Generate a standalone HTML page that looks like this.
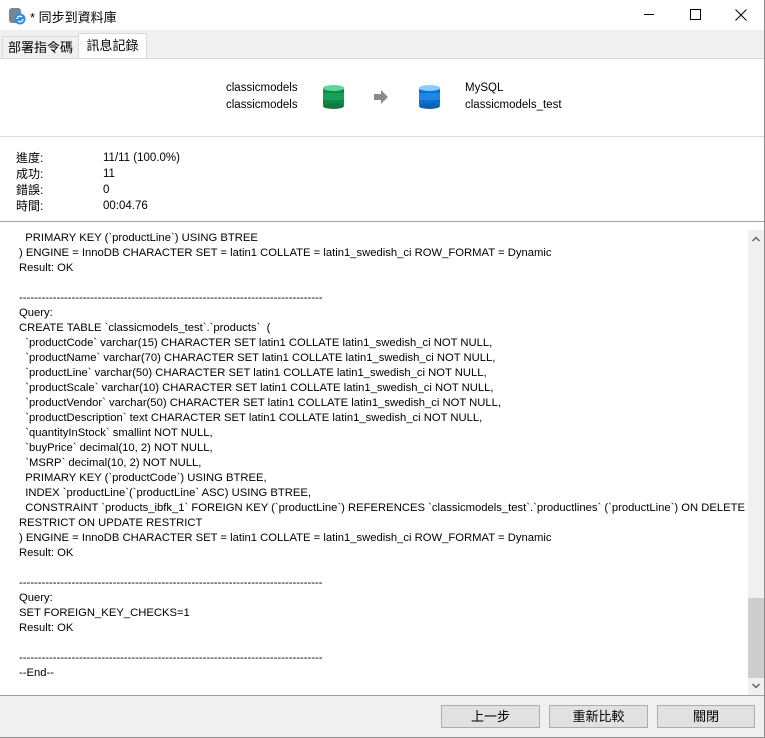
<!DOCTYPE html>
<html><head><meta charset="utf-8"><style>
*{margin:0;padding:0;box-sizing:border-box}
body{width:765px;height:738px;overflow:hidden;background:#f0f0f0;font-family:"Liberation Sans","Noto Sans CJK TC",sans-serif;font-size:12px;color:#000;position:relative}
.a{position:absolute}
.log div{height:15px;line-height:15px;white-space:pre;font-size:11.25px}
.btn{position:absolute;top:705px;height:23px;border:1px solid #adadad;background:#e1e1e1;text-align:center;line-height:21px;font-size:13px}
</style></head><body>
<div class="a" style="left:0;top:0;width:765px;height:30px;background:#fff"></div>
<svg class="a" style="left:8px;top:7px" width="18" height="18"><rect x="1" y="1" width="12" height="15" rx="3" fill="#7a8593"/><circle cx="12" cy="12" r="5.5" fill="#2d8ee0"/><path d="M9 12a3 3 0 0 1 5-2M15 12a3 3 0 0 1-5 2" stroke="#fff" stroke-width="1.3" fill="none"/></svg>
<div class="a" style="left:30px;top:7px;font-size:13px">* 同步到資料庫</div>
<div class="a" style="left:644px;top:14px;width:10px;height:1px;background:#000"></div>
<div class="a" style="left:690px;top:9px;width:11px;height:11px;border:1px solid #000"></div>
<svg class="a" style="left:735px;top:9px" width="12" height="12"><path d="M0.5 0.5L11.5 11.5M11.5 0.5L0.5 11.5" stroke="#000"/></svg>
<div class="a" style="left:764px;top:0;width:1px;height:738px;background:#8a8a8a"></div>
<div class="a" style="left:2px;top:36px;width:77px;height:23px;border:1px solid #d9d9d9;background:#f0f0f0;font-size:13px;text-align:center;line-height:21px">部署指令碼</div>
<div class="a" style="left:78px;top:33px;width:69px;height:26px;border:1px solid #d9d9d9;border-bottom:none;background:#fff;font-size:13px;text-align:center;line-height:23px">訊息記錄</div>
<div class="a" style="left:0;top:58px;width:764px;height:637px;background:#fff;border-top:1px solid #d9d9d9"></div>
<div class="a" style="left:147px;top:58px;width:617px;height:1px;background:#d9d9d9"></div>
<div class="a" style="left:226px;top:80px;line-height:17px;font-size:11.5px">classicmodels<br>classicmodels</div>
<svg class="a" style="left:322px;top:84px" width="24" height="26"><rect x="1" y="3" width="21" height="20" rx="3" fill="#0e8a48"/><rect x="1" y="9" width="21" height="7" fill="#14a056"/><ellipse cx="11.5" cy="4" rx="10.5" ry="3" fill="#5fd49a"/><ellipse cx="11.5" cy="22" rx="10.5" ry="3" fill="#0e7a3f"/></svg>
<svg class="a" style="left:373px;top:89px" width="16" height="16"><path d="M1 5h7V1l7 7-7 7v-4H1z" fill="#8a8a8a"/></svg>
<svg class="a" style="left:418px;top:84px" width="24" height="26"><rect x="1" y="3" width="21" height="20" rx="3" fill="#0d6fd0"/><rect x="1" y="9" width="21" height="7" fill="#1b88e6"/><ellipse cx="11.5" cy="4" rx="10.5" ry="3" fill="#8ccbff"/><ellipse cx="11.5" cy="22" rx="10.5" ry="3" fill="#0b62bb"/></svg>
<div class="a" style="left:465px;top:80px;line-height:17px;font-size:11.5px">MySQL<br>classicmodels_test</div>
<div class="a" style="left:0;top:136px;width:764px;height:1px;background:#dadada"></div>
<div class="a" style="left:16px;top:150px;line-height:16px">進度:<br>成功:<br>錯誤:<br>時間:</div>
<div class="a" style="left:103px;top:150px;line-height:16px;font-size:11.5px">11/11 (100.0%)<br>11<br>0<br>00:04.76</div>
<div class="a" style="left:0;top:221px;width:764px;height:1px;background:#a0a0a0"></div>
<div class="a log" style="left:19px;top:231px;width:729px;overflow:hidden">
<div>  PRIMARY KEY (`productLine`) USING BTREE</div>
<div>) ENGINE = InnoDB CHARACTER SET = latin1 COLLATE = latin1_swedish_ci ROW_FORMAT = Dynamic</div>
<div>Result: OK</div>
<div></div>
<div>---------------------------------------------------------------------------------</div>
<div>Query:</div>
<div>CREATE TABLE `classicmodels_test`.`products`  (</div>
<div>  `productCode` varchar(15) CHARACTER SET latin1 COLLATE latin1_swedish_ci NOT NULL,</div>
<div>  `productName` varchar(70) CHARACTER SET latin1 COLLATE latin1_swedish_ci NOT NULL,</div>
<div>  `productLine` varchar(50) CHARACTER SET latin1 COLLATE latin1_swedish_ci NOT NULL,</div>
<div>  `productScale` varchar(10) CHARACTER SET latin1 COLLATE latin1_swedish_ci NOT NULL,</div>
<div>  `productVendor` varchar(50) CHARACTER SET latin1 COLLATE latin1_swedish_ci NOT NULL,</div>
<div>  `productDescription` text CHARACTER SET latin1 COLLATE latin1_swedish_ci NOT NULL,</div>
<div>  `quantityInStock` smallint NOT NULL,</div>
<div>  `buyPrice` decimal(10, 2) NOT NULL,</div>
<div>  `MSRP` decimal(10, 2) NOT NULL,</div>
<div>  PRIMARY KEY (`productCode`) USING BTREE,</div>
<div>  INDEX `productLine`(`productLine` ASC) USING BTREE,</div>
<div>  CONSTRAINT `products_ibfk_1` FOREIGN KEY (`productLine`) REFERENCES `classicmodels_test`.`productlines` (`productLine`) ON DELETE</div>
<div>RESTRICT ON UPDATE RESTRICT</div>
<div>) ENGINE = InnoDB CHARACTER SET = latin1 COLLATE = latin1_swedish_ci ROW_FORMAT = Dynamic</div>
<div>Result: OK</div>
<div></div>
<div>---------------------------------------------------------------------------------</div>
<div>Query:</div>
<div>SET FOREIGN_KEY_CHECKS=1</div>
<div>Result: OK</div>
<div></div>
<div>---------------------------------------------------------------------------------</div>
<div>--End--</div>
</div>
<div class="a" style="left:748px;top:230px;width:16px;height:465px;background:#f0f0f0"></div>
<div class="a" style="left:748px;top:598px;width:16px;height:80px;background:#cdcdcd"></div>
<svg class="a" style="left:752px;top:236px" width="8" height="6"><path d="M0.5 5L4 1.5 7.5 5" stroke="#606060" stroke-width="1.5" fill="none"/></svg>
<svg class="a" style="left:752px;top:683px" width="8" height="6"><path d="M0.5 1L4 4.5 7.5 1" stroke="#606060" stroke-width="1.5" fill="none"/></svg>
<div class="a" style="left:0;top:695px;width:764px;height:1px;background:#a0a0a0"></div>
<div class="btn" style="left:441px;width:99px">上一步</div>
<div class="btn" style="left:549px;width:99px">重新比較</div>
<div class="btn" style="left:657px;width:98px">關閉</div>
<div class="a" style="left:0;top:737px;width:765px;height:1px;background:#8a8a8a"></div>
</body></html>
